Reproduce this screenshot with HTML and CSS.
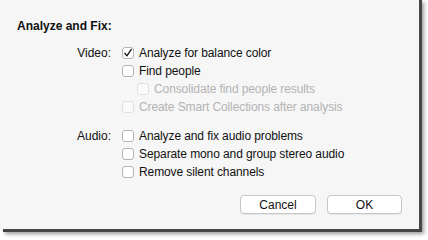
FILE: index.html
```html
<!DOCTYPE html>
<html>
<head>
<meta charset="utf-8">
<link rel="stylesheet" href="styles.css">
</head>
<body>
<div class="dialog">
  <div class="title">Analyze and Fix:</div>
  <div class="section">
    <div class="sec-label">Video:</div>
    <div class="options">
      <div class="opt"><span class="box"><svg width="12" height="12" viewBox="0 0 12 12"><path d="M2.8 6.2 L4.9 8.9 L9.3 2.4" fill="none" stroke="#111" stroke-width="1.3" stroke-linecap="round" stroke-linejoin="round"/></svg></span>Analyze for balance color</div>
      <div class="opt"><span class="box"></span>Find people</div>
      <div class="opt sub disabled"><span class="box"></span>Consolidate find people results</div>
      <div class="opt disabled"><span class="box"></span>Create Smart Collections after analysis</div>
    </div>
  </div>
  <div class="section audio">
    <div class="sec-label">Audio:</div>
    <div class="options">
      <div class="opt"><span class="box"></span>Analyze and fix audio problems</div>
      <div class="opt"><span class="box"></span>Separate mono and group stereo audio</div>
      <div class="opt"><span class="box"></span>Remove silent channels</div>
    </div>
  </div>
  <div class="buttons">
    <button class="btn cancel">Cancel</button>
    <button class="btn ok">OK</button>
  </div>
</div>
</body>
</html>
```

FILE: styles.css
```css
html, body {
  margin: 0;
  padding: 0;
  background: #ffffff;
}
body {
  width: 428px;
  height: 240px;
  overflow: hidden;
  font-family: "Liberation Sans", Arial, sans-serif;
  font-size: 12px;
  color: #111;
}
.dialog {
  box-sizing: border-box;
  width: 419px;
  height: 232px;
  margin-top: -3px;
  padding: 22px 17px 0 17px;
  background: #f6f6f6;
  box-shadow: 3px 3px 0 #454545, 5px 5px 4px rgba(0, 0, 0, 0.4);
}
.title {
  font-weight: bold;
  line-height: 15px;
  margin-bottom: 10px;
}
.section {
  display: grid;
  grid-template-columns: 94px 1fr;
  column-gap: 11px;
}
.section.audio {
  margin-top: 11px;
}
.sec-label {
  text-align: right;
  line-height: 18px;
}
.options {
  display: flex;
  flex-direction: column;
}
.opt {
  display: flex;
  align-items: center;
  height: 18px;
  white-space: nowrap;
  letter-spacing: -0.1px;
}
.opt.sub {
  margin-left: 15px;
}
.box {
  box-sizing: border-box;
  width: 12px;
  height: 12px;
  margin-right: 5px;
  border: 1px solid #b4b4b4;
  border-radius: 3px;
  background: #fff;
  display: flex;
  align-items: center;
  justify-content: center;
  flex: none;
}
.box svg {
  display: block;
  margin: -1px;
}
.disabled {
  color: #b3b3b3;
}
.disabled .box {
  border-color: #dedede;
  background: #fbfbfb;
}
.buttons {
  display: flex;
  justify-content: flex-end;
  gap: 11px;
  margin-top: 14px;
}
.btn {
  box-sizing: border-box;
  height: 19px;
  padding: 0;
  font-family: "Liberation Sans", Arial, sans-serif;
  font-size: 12px;
  color: #111;
  background: #fff;
  border: 1px solid #c6c6c6;
  border-radius: 4px;
  box-shadow: 0 1px 0 rgba(0, 0, 0, 0.06);
}
.btn.cancel { width: 76px; }
.btn.ok { width: 75px; }
```
